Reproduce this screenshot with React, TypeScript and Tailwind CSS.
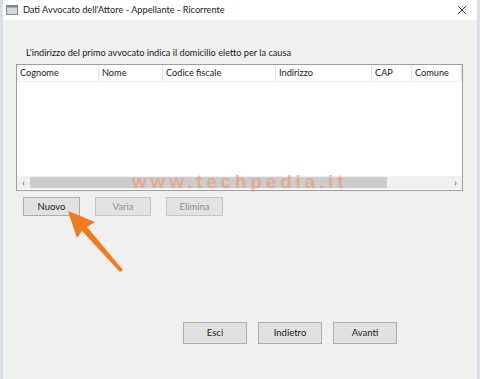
import React from "react";

const columns = [
  { label: "Cognome", w: "w-[82px]" },
  { label: "Nome", w: "w-[64px]" },
  { label: "Codice fiscale", w: "w-[113px]" },
  { label: "Indirizzo", w: "w-[96px]" },
  { label: "CAP", w: "w-[40px]" },
  { label: "Comune", w: "flex-1" },
];

function Btn({
  label,
  disabled,
  className,
}: {
  label: string;
  disabled?: boolean;
  className?: string;
}) {
  return (
    <button
      className={
        "h-[19px] border text-[9.5px] leading-none flex items-center justify-center " +
        (disabled
          ? "bg-[#e3e3e3] border-[#c6c6c6] text-[#8e8e8e] "
          : "bg-[#e1e1e1] border-[#adadad] text-[#1a1a1a] ") +
        (className ?? "")
      }
    >
      {label}
    </button>
  );
}

export default function App() {
  return (
    <div className="relative w-[480px] h-[379px] overflow-hidden bg-white font-['Lato',sans-serif] text-[#1a1a1a]">
      <div className="flex flex-col h-full border-l-[3px] border-r-[3px] border-[#d3e0e6]">
        {/* title bar */}
        <div className="h-[20px] bg-white flex items-center pl-[3px] pr-[10px]">
          <svg width="12" height="12" viewBox="0 0 12 12" className="mr-[5px]">
            <rect x="0.5" y="1.5" width="11" height="9" fill="#cfd6dc" stroke="#7d8790" />
            <rect x="0.5" y="1.5" width="11" height="2" fill="#7d8790" />
          </svg>
          <span className="text-[9.2px]">
            Dati Avvocato dell'Attore - Appellante - Ricorrente
          </span>
          <svg width="10" height="10" viewBox="0 0 10 10" className="ml-auto">
            <path d="M1 1L9 9M9 1L1 9" stroke="#333" strokeWidth="1" />
          </svg>
        </div>

        {/* client area */}
        <div className="flex-1 bg-[#f0f0f0] flex flex-col pl-[13px] pr-[14px]">
          <div className="text-[9.2px] mt-[27px] ml-[10px] leading-[12px]">
            L'indirizzo del primo avvocato indica il domicilio eletto per la causa
          </div>

          {/* list view */}
          <div className="mt-[5px] h-[127px] border border-[#9a9fa5] bg-white flex flex-col">
            <div className="h-[17px] flex border-b border-[#ececec]">
              {columns.map((c) => (
                <div
                  key={c.label}
                  className={c.w + " border-r border-[#e2e2e2] text-[9.2px] pl-[3px] flex items-center"}
                >
                  {c.label}
                </div>
              ))}
            </div>
            <div className="flex-1" />
            <div className="h-[13px] mb-[1px] bg-[#f0f0f0] flex items-center">
              <span className="w-[13px] text-[9px] leading-none text-center text-[#444]">‹</span>
              <div className="h-[11px] w-[357px] bg-[#cdcdcd]" />
              <div className="flex-1" />
              <span className="w-[13px] text-[9px] leading-none text-center text-[#444]">›</span>
            </div>
          </div>

          <div className="flex gap-[15px] mt-[5px] ml-[7px]">
            <Btn label="Nuovo" className="w-[57px] mt-[1px]" />
            <Btn label="Varia" disabled className="w-[56px] mt-[1px]" />
            <Btn label="Elimina" disabled className="w-[57px] mt-[1px]" />
          </div>

          <div className="flex gap-[11px] mt-[106px] ml-[167px]">
            <Btn label="Esci" className="w-[64px] h-[22px]" />
            <Btn label="Indietro" className="w-[64px] h-[22px]" />
            <Btn label="Avanti" className="w-[64px] h-[22px]" />
          </div>
        </div>
      </div>

      {/* watermark */}
      <div className="absolute left-[132px] top-[171px] text-[19px] font-bold tracking-[3.8px] text-[#f0956a] opacity-60 font-['Liberation_Sans',sans-serif] leading-[22px]">
        www.techpedia.it
      </div>

      {/* arrow */}
      <svg className="absolute left-0 top-0" width="480" height="379" viewBox="0 0 480 379">
        <polygon
          points="68,211 95,222 87,227 123,270 120,272 82,231 77,238"
          fill="#f07a1c"
        />
      </svg>
    </div>
  );
}
